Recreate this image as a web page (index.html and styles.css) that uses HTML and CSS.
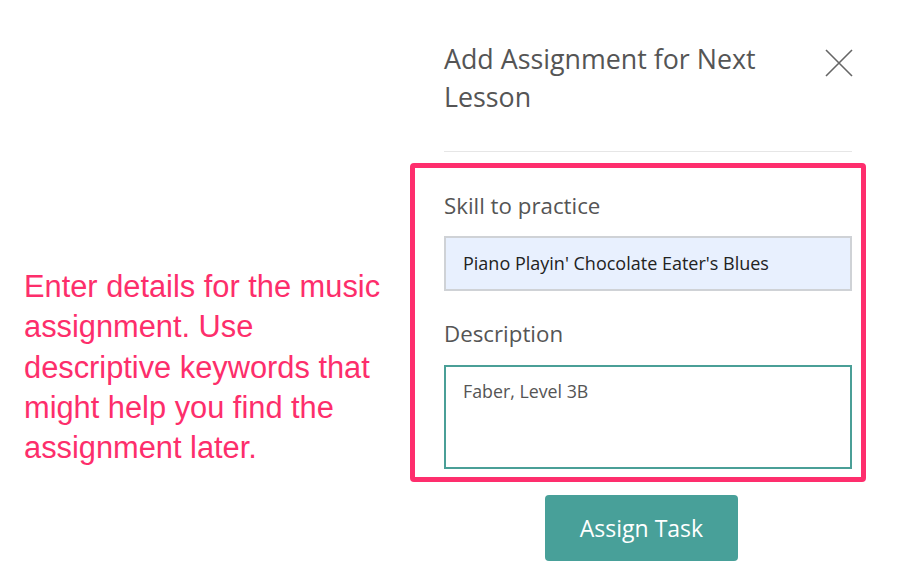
FILE: index.html
```
<!DOCTYPE html>
<html>
<head>
<meta charset="utf-8">
<link rel="stylesheet" href="styles.css">
</head>
<body>
<div class="page">
  <div class="note">
    <p>Enter details for the music assignment. Use descriptive keywords that might help you find the assignment later.</p>
  </div>
  <div class="panel">
    <div class="header">
      <h1 class="title">Add Assignment for Next Lesson</h1>
      <svg class="close" width="28" height="28" viewBox="0 0 28 28"><path d="M1 1 L27 27 M27 1 L1 27" stroke="#666" stroke-width="1.6" fill="none"/></svg>
    </div>
    <div class="highlight">
      <label class="label">Skill to practice</label>
      <div class="input">Piano Playin' Chocolate Eater's Blues</div>
      <label class="label label-desc">Description</label>
      <div class="textarea">Faber, Level 3B</div>
    </div>
    <button class="btn">Assign Task</button>
  </div>
</div>
</body>
</html>
```
FILE: styles.css
```
html, body { margin: 0; padding: 0; background: #fff; }
.page { display: flex; width: 900px; height: 584px; overflow: hidden; }
.note { width: 386px; padding-left: 24px; flex-shrink: 0; }
.note p {
  margin: 267px 0 0 0;
  font-family: "Liberation Sans", Arial, sans-serif;
  font-size: 30.8px;
  line-height: 40.3px;
  color: #fd2e6b;
  width: 372px;
}
.panel { width: 456px; flex-shrink: 0; font-family: "Open Sans", sans-serif; }
.header {
  margin-left: 34px;
  width: 408px;
  padding-top: 40px;
  padding-bottom: 35px;
  border-bottom: 1px solid #e6e6e6;
  display: flex;
  justify-content: space-between;
  align-items: flex-start;
}
.title {
  margin: 0;
  font-weight: 400;
  font-size: 26.8px;
  line-height: 38px;
  color: #555;
  width: 350px;
}
.close { margin-top: 9px; margin-right: -1px; }
.highlight {
  margin-top: 11px;
  border: 5px solid #fe2e6d;
  border-radius: 4px;
  padding: 24px 9px 8px 29px;
  width: 408px;
}
.label { display: block; font-size: 22.3px; line-height: 28px; color: #555; }
.label-desc { margin-top: 29px; }
.input {
  margin-top: 16px;
  box-sizing: border-box;
  height: 55px;
  border: 2px solid #cfd2d6;
  background: #e8f0fe;
  padding-left: 17px;
  font-size: 18px;
  line-height: 51px;
  color: #222;
}
.textarea {
  margin-top: 17px;
  box-sizing: border-box;
  height: 104px;
  border: 2px solid #4a9f97;
  padding: 12px 17px;
  font-size: 17.8px;
  line-height: 24px;
  color: #555;
}
.btn {
  display: block;
  margin: 13px 0 0 135px;
  width: 193px;
  height: 66px;
  border: none;
  border-radius: 4px;
  background: #48a099;
  color: #fff;
  font-family: "Open Sans", sans-serif;
  font-size: 23px;
  padding: 0;
}
```
